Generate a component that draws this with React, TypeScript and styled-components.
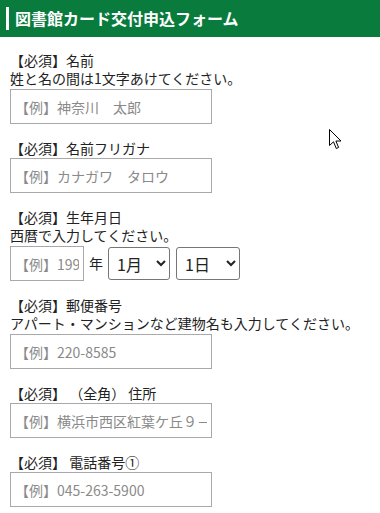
import { FC } from "react";
import styled, { createGlobalStyle } from "styled-components";

const GlobalStyle = createGlobalStyle`
  body {
    margin: 0;
    background-color: #ffffff;
    font-family: "Noto Sans CJK JP", "Noto Sans", sans-serif;
    color: #222222;
  }
`;

const Page = styled.div`
  position: relative;
  width: 380px;
  min-height: 513px;
`;

const Header = styled.header`
  display: flex;
  align-items: center;
  height: 37px;
  background-color: #087b3d;
  padding-left: 6px;
`;

const Title = styled.h1`
  margin: 0;
  border-left: 3px solid #ffffff;
  padding-left: 6px;
  color: #ffffff;
  font-size: 16px;
  font-weight: 700;
  line-height: 23px;
`;

const Form = styled.form`
  padding: 0 10px;
`;

const Field = styled.div`
  margin-top: 15px;
  display: flex;
  flex-direction: column;
  align-items: flex-start;

  &:first-child {
    margin-top: 14px;
  }
`;

const Label = styled.label`
  font-size: 14px;
  line-height: 18px;
  white-space: pre;
`;

const Note = styled.p`
  margin: 0 0 1px;
  font-size: 14px;
  line-height: 18px;
`;

const TextInput = styled.input<{ $width?: number }>`
  box-sizing: border-box;
  width: ${(p) => p.$width ?? 202}px;
  height: 35px;
  margin: 1px 0 0;
  padding: 0 4px;
  border: 1px solid #a9a9a9;
  border-radius: 0;
  font-family: inherit;
  font-size: 14px;
  color: #222222;
  background-color: #ffffff;

  &::placeholder {
    color: #8a8a8a;
  }
`;

const DateRow = styled.div`
  display: flex;
  align-items: center;
`;

const Unit = styled.span`
  padding: 0 5px;
  font-size: 14px;
  line-height: 18px;
`;

const Select = styled.select<{ $width: number }>`
  box-sizing: border-box;
  width: ${(p) => p.$width}px;
  height: 33px;
  margin: 1px 6px 0 0;
  padding: 0 4px;
  border: 1px solid #767676;
  border-radius: 3px;
  background-color: #ffffff;
  color: #222222;
  font-family: inherit;
  font-size: 16px;
`;

const Cursor = styled.svg`
  position: absolute;
  left: 329px;
  top: 129px;
  pointer-events: none;
`;

const months = Array.from({ length: 12 }, (_, i) => `${i + 1}月`);
const days = Array.from({ length: 31 }, (_, i) => `${i + 1}日`);

const App: FC = () => {
  return (
    <>
      <GlobalStyle />
      <Page>
        <Header>
          <Title>図書館カード交付申込フォーム</Title>
        </Header>
        <Form>
          <Field>
            <Label>【必須】名前</Label>
            <Note>姓と名の間は1文字あけてください。</Note>
            <TextInput placeholder="【例】神奈川　太郎" />
          </Field>
          <Field>
            <Label>【必須】名前フリガナ</Label>
            <TextInput placeholder="【例】カナガワ　タロウ" />
          </Field>
          <Field>
            <Label>【必須】生年月日</Label>
            <Note>西暦で入力してください。</Note>
            <DateRow>
              <TextInput $width={74} placeholder="【例】1990" />
              <Unit>年</Unit>
              <Select $width={62} defaultValue="1月">
                {months.map((m) => (
                  <option key={m}>{m}</option>
                ))}
              </Select>
              <Select $width={64} defaultValue="1日">
                {days.map((d) => (
                  <option key={d}>{d}</option>
                ))}
              </Select>
            </DateRow>
          </Field>
          <Field>
            <Label>【必須】郵便番号</Label>
            <Note>アパート・マンションなど建物名も入力してください。</Note>
            <TextInput placeholder="【例】220-8585" />
          </Field>
          <Field>
            <Label>【必須】 （全角） 住所</Label>
            <TextInput placeholder="【例】横浜市西区紅葉ケ丘９－２" />
          </Field>
          <Field>
            <Label>【必須】 電話番号①</Label>
            <TextInput placeholder="【例】045-263-5900" />
          </Field>
        </Form>
        <Cursor width="13" height="21" viewBox="0 0 13 21">
          <path
            d="M0.5 0.5 L0.5 16.5 L4.5 12.8 L7.3 19.5 L9.6 18.5 L6.9 12 L12 12 Z"
            fill="#ffffff"
            stroke="#000000"
            strokeWidth="1"
            strokeLinejoin="miter"
          />
        </Cursor>
      </Page>
    </>
  );
};

export default App;
